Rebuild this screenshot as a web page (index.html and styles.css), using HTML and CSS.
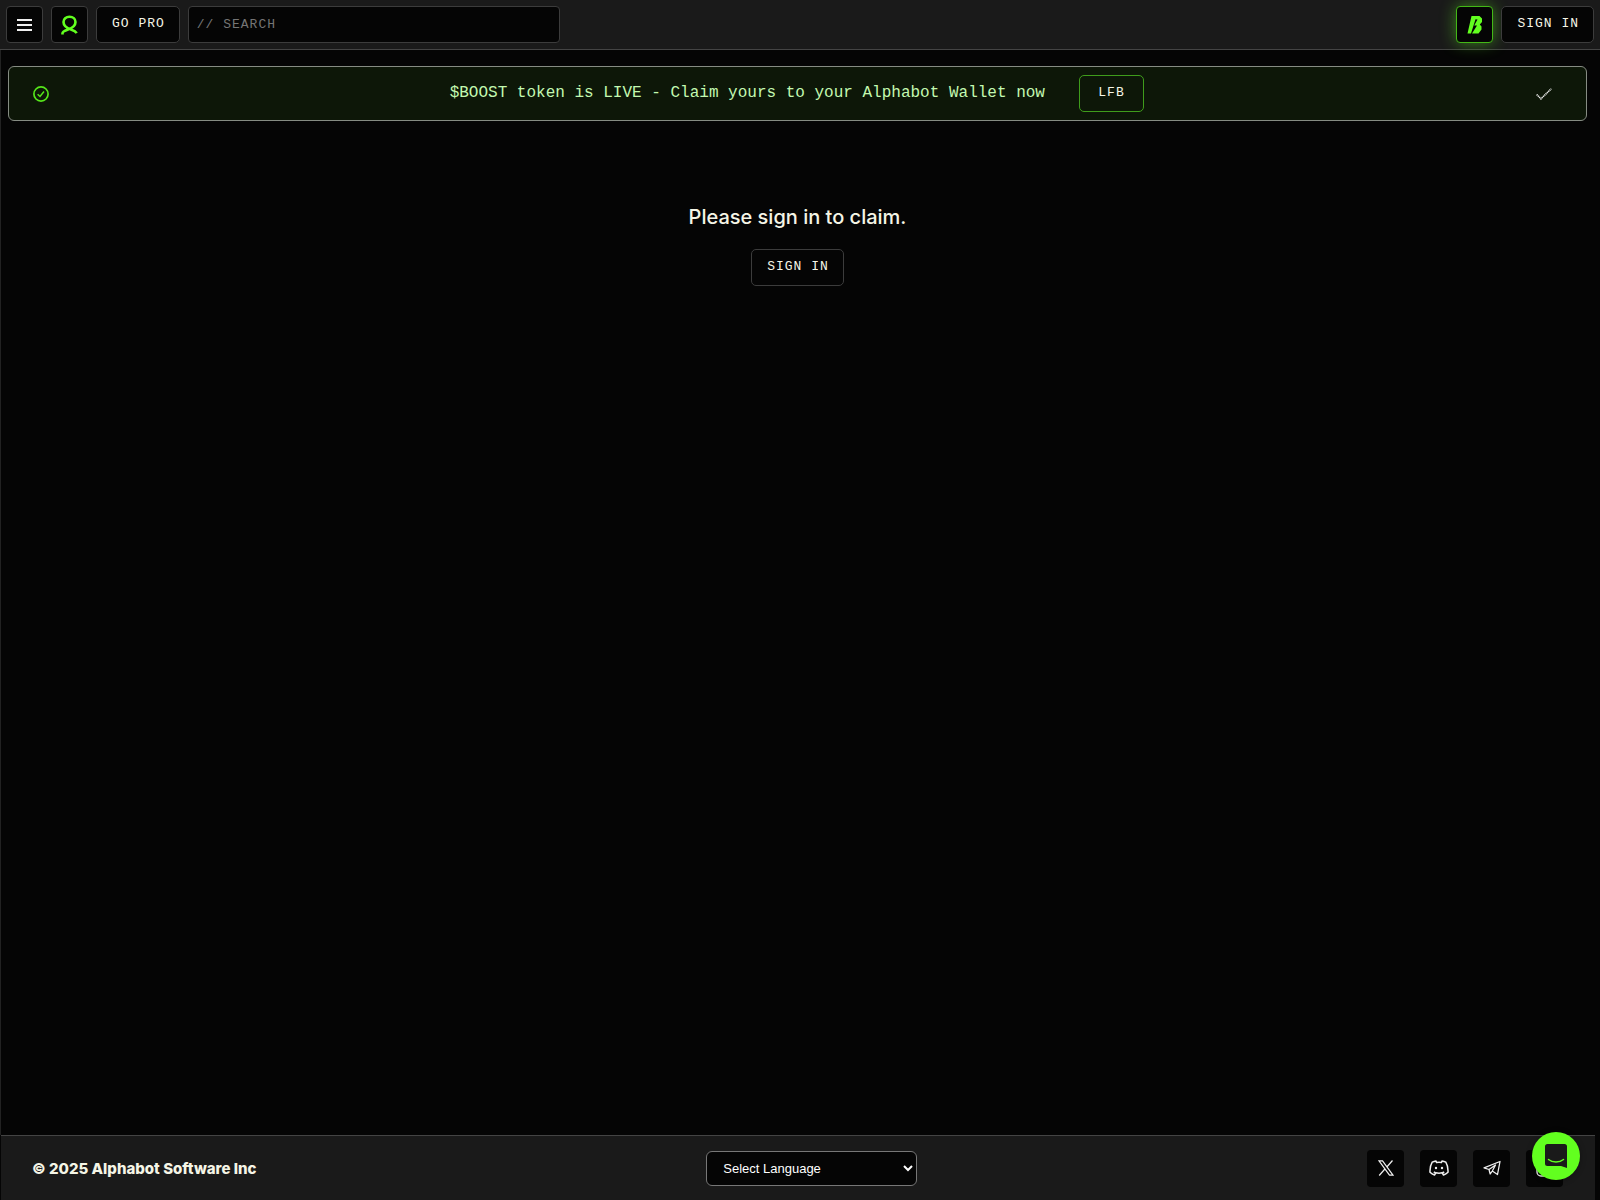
FILE: index.html
```
<!DOCTYPE html>
<html lang="en">
<head>
  <meta charset="UTF-8" />
  <meta name="viewport" content="width=device-width, initial-scale=1.0"/>
  <title>Alphabot - Claim</title>
  <link rel="stylesheet" href="styles.css">
</head>
<body>
  <header class="topbar">
    <button class="btn icon-btn" aria-label="Menu">
      <svg width="17" height="15" viewBox="0 0 17 15" fill="none" stroke="#f0f0f0" stroke-width="1.8">
        <path d="M1 3h15M1 8h15M1 13h15"/>
      </svg>
    </button>
    <a class="btn icon-btn" href="#" aria-label="Alphabot home">
      <svg width="17" height="20" viewBox="0 0 17 20" fill="none" stroke="#62ff1f" stroke-width="2.6">
        <path d="M1.500 19.500v-1.300c0-1.600 2-2.500 5-3.500 4-1.300 8-3.400 8-7.700 0-3.200-2.500-5.200-6-5.200s-6 2-6 5.200c0 4.300 4 6.400 8 7.700 2.700.9 4.200 1.700 5.200 3.400"/>
      </svg>
    </a>
    <a class="btn" href="#">GO PRO</a>
    <input class="search" type="text" placeholder="// SEARCH" aria-label="Search">
    <div class="topbar-right">
      <a class="btn icon-btn boost" href="#" aria-label="Boost">
        <svg width="16" height="18" viewBox="0 0 16 18" fill="#62ff1f">
          <path fill-rule="evenodd" d="M4.500 0H12.500L15 2.500V6L12.800 8.500L14.500 10.500V13.500L11.500 17.500H5L10 9.500H7.200L10.500 3.500L8.500 3.300L4 17.500H0.500Z"/>
        </svg>
      </a>
      <button class="btn">SIGN IN</button>
    </div>
  </header>

  <main class="content">
    <div class="banner">
      <svg width="16" height="16" viewBox="0 0 16 16" fill="none" stroke="#55e61a">
        <circle cx="8" cy="8" r="7.100" stroke-width="1.700"/>
        <path d="M4.600 8.300l2.400 2.200 4-5" stroke-width="1.500"/>
      </svg>
      <div class="banner-body">
        <span>$BOOST token is LIVE - Claim yours to your Alphabot Wallet now</span>
        <a class="btn lfb" href="#">LFB</a>
      </div>
      <button class="dismiss" aria-label="Dismiss">
        <svg width="16" height="12" viewBox="0 0 16 12" fill="none" stroke="#f0f0f0" stroke-width="1.600" stroke-dasharray="1.200 .6">
          <path d="M.7 6.500l4.300 4.300L15.300.7"/>
        </svg>
      </button>
    </div>

    <section class="claim">
      <h1>Please sign in to claim.</h1>
      <button class="btn">SIGN IN</button>
    </section>
  </main>

  <footer class="footer">
    <strong>© 2025 Alphabot Software Inc</strong>
    <select class="language" aria-label="Language">
      <option>Select Language</option>
    </select>
    <nav class="socials">
      <a href="#" aria-label="X">
        <svg width="16" height="16" viewBox="0 0 16 16" fill="none" stroke="#f0f0f0" stroke-width="1.200">
          <path d="M1 .8h3.500L15 15.200h-3.500zM14.500.5L8.800 7M6.900 9L1.200 15.500"/>
        </svg>
      </a>
      <a href="#" aria-label="Discord">
        <svg width="20" height="16" viewBox="0 0 20 16" fill="none" stroke="#f0f0f0" stroke-width="1.500" stroke-linejoin="round">
          <path d="M7.500 2.500L7 1C5.500 1.200 4.300 1.600 3.200 2.200C1.500 5 .8 8.500 1 12.300C2.300 13.600 3.700 14.500 5.500 15L6.800 12.800C9 13.300 11 13.300 13.200 12.800L14.500 15C16.300 14.500 17.700 13.600 19 12.300C19.200 8.500 18.500 5 16.800 2.200C15.700 1.600 14.500 1.200 13 1L12.500 2.500C10.800 2.200 9.200 2.200 7.500 2.500z"/>
          <path d="M4.800 12c.7.400 1.300.6 2 .8M15.200 12c-.7.400-1.300.6-2 .8"/>
          <circle cx="7" cy="8" r="1.200" fill="#f0f0f0" stroke="none"/>
          <circle cx="13" cy="8" r="1.200" fill="#f0f0f0" stroke="none"/>
        </svg>
      </a>
      <a href="#" aria-label="Telegram">
        <svg width="18" height="16" viewBox="0 0 18 16" fill="none" stroke="#f0f0f0" stroke-width="1.300" stroke-linejoin="round">
          <path d="M1 7.800L17 1.500L14.500 14.500L9.300 11L7.200 14L6 9.500zM6 9.500L12.500 5L9.300 11"/>
        </svg>
      </a>
      <a href="#" aria-label="Instagram">
        <svg width="18" height="18" viewBox="0 0 18 18" fill="none" stroke="#f0f0f0" stroke-width="1.400">
          <rect x="1" y="1" width="16" height="16" rx="4"/>
          <circle cx="9" cy="9" r="4"/>
        </svg>
      </a>
    </nav>
  </footer>

  <button class="chat" aria-label="Open chat">
    <svg width="22" height="24" viewBox="0 0 22 24">
      <path fill="#1a1a1a" d="M2.500 0h17a2.500 2.500 0 0 1 2.500 2.500v21.500l-6-2H2.500a2.500 2.500 0 0 1-2.500-2.500V2.500a2.500 2.500 0 0 1 2.500-2.500z"/>
      <path fill="none" stroke="#62ff1f" stroke-width="1.500" stroke-linecap="round" d="M3.500 15.500c4 3.300 11 3.300 15 0"/>
    </svg>
  </button>
</body>
</html>
```
FILE: styles.css
```
* {
  box-sizing: border-box;
}

body {
  margin: 0;
  min-height: 100vh;
  display: flex;
  flex-direction: column;
  background: #050505;
  color: #f5f5e6;
  font-family: Inter, sans-serif;
  font-size: 16px;
}

svg {
  display: block;
}

.topbar {
  display: flex;
  gap: 8px;
  padding: 6px;
  background: #1a1a1a;
  border-bottom: 1px solid #444;
}

.topbar-right {
  display: flex;
  gap: 8px;
  margin-left: auto;
}

.btn {
  display: flex;
  align-items: center;
  justify-content: center;
  height: 37px;
  padding: 0 14px 2px 15px;
  background: #050505;
  border: 1px solid #3c3c3c;
  border-radius: 5px;
  color: #f5f5e6;
  font-family: "Liberation Mono", monospace;
  font-size: 13px;
  letter-spacing: 1px;
  text-decoration: none;
  cursor: pointer;
}

.btn:hover {
  border-color: #888;
}

.icon-btn {
  width: 37px;
  padding: 0;
  border-radius: 4px;
}

.boost {
  border-color: #43b817;
  box-shadow: 0 0 16px rgba(98, 255, 31, 0.45);
}

.search {
  width: 372px;
  height: 37px;
  padding: 0 8px;
  background: #050505;
  border: 1px solid #3c3c3c;
  border-radius: 4px;
  color: #f5f5e6;
  font-family: "Liberation Mono", monospace;
  font-size: 13px;
  letter-spacing: 1px;
}

.search::placeholder {
  color: #757575;
}

.content {
  flex: 1;
  margin-right: 5px;
  padding: 16px 8px 16px 7px;
  border-left: 1px solid #222;
}

.banner {
  display: flex;
  align-items: center;
  padding: 8px 34px 8px 24px;
  background: #0d1708;
  border: 1px solid #868c83;
  border-radius: 6px;
}

.banner-body {
  flex: 1;
  display: flex;
  align-items: center;
  justify-content: center;
  gap: 26px;
  color: #c3f9b0;
  font-family: "Liberation Mono", monospace;
}

.banner-body span {
  min-width: 612px;
  padding-bottom: 2px;
  text-align: center;
}

.lfb {
  padding: 0 18px 2px;
  background: none;
  border-color: #3f9c1b;
}

.dismiss {
  padding: 0;
  background: none;
  border: none;
  cursor: pointer;
}

.claim {
  display: flex;
  flex-direction: column;
  align-items: center;
  gap: 20px;
  margin-top: 84px;
}

.claim h1 {
  margin: 0;
  font-size: 20px;
  font-weight: 500;
  line-height: 24px;
}

.footer {
  display: flex;
  align-items: center;
  justify-content: space-between;
  height: 65px;
  margin: 0 5px 0 1px;
  padding: 0 32px 0 31px;
  background: #1a1a1a;
  border-top: 1px solid #444;
}

.footer strong {
  font-size: 15px;
  font-weight: 800;
}

.language {
  width: 211px;
  height: 35px;
  padding-left: 12px;
  background: #050505;
  border: 1px solid #777;
  border-radius: 6px;
  color: #fff;
  font-family: "Liberation Sans", sans-serif;
  font-size: 13px;
}

.socials {
  display: flex;
  gap: 16px;
}

.socials a {
  display: flex;
  align-items: center;
  justify-content: center;
  width: 37px;
  height: 37px;
  background: #050505;
  border-radius: 4px;
}

.chat {
  position: fixed;
  right: 20px;
  bottom: 20px;
  display: flex;
  align-items: center;
  justify-content: center;
  width: 48px;
  height: 48px;
  padding: 0;
  background: #62ff1f;
  border: none;
  border-radius: 50%;
  box-shadow: 0 1px 6px rgba(0, 0, 0, 0.3);
  cursor: pointer;
}
```
